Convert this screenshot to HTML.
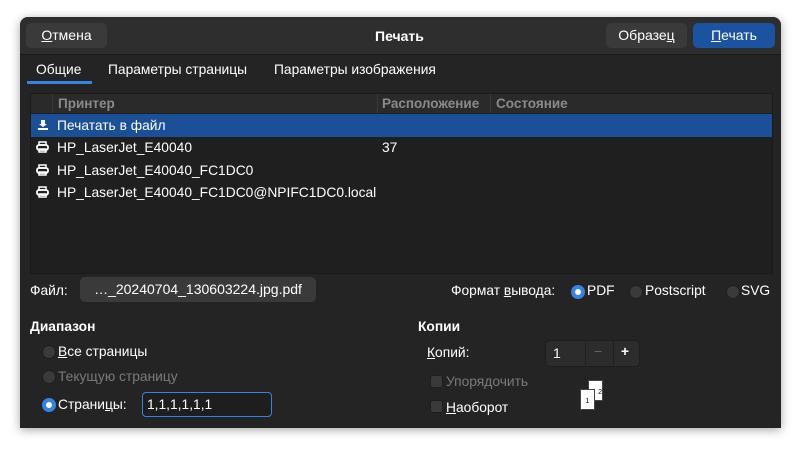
<!DOCTYPE html>
<html><head><meta charset="utf-8"><style>
body{margin:0;width:800px;height:450px;background:#fff;font-family:"Liberation Sans","DejaVu Sans",sans-serif;font-size:13.8px;color:#fff;position:relative;overflow:hidden}
.dlg{position:absolute;left:20px;top:17px;width:761px;height:411px;background:#242424;border-radius:8px 8px 0 0;box-shadow:0 2px 10px rgba(0,0,0,.35)}
.hdr{position:absolute;left:0;top:0;width:761px;height:37px;background:#2e2e2e;border-bottom:1px solid #1b1b1b;border-radius:8px 8px 0 0}
.btn{position:absolute;height:25px;line-height:25px;text-align:center;border-radius:5px;background:#3a3a3a;font-size:14px}
.a{position:absolute;white-space:nowrap}
.u{text-decoration:underline}
.radio{position:absolute;width:12px;height:12px;border-radius:50%;background:#3a3a3a;border:1px solid #1e1e1e}
.radio.on{background:#fff;border:4px solid #3584e4;width:6px;height:6px}
.chk{position:absolute;width:11px;height:11px;border-radius:3px;background:#3a3a3a;border:1px solid #1e1e1e}
svg.ic{position:absolute}
</style></head><body>
<div class="dlg">
 <div class="hdr">
  <div class="btn" style="left:6px;top:6px;width:81px"><span class="u">О</span>тмена</div>
  <div class="a" style="left:355px;top:11px;font-weight:bold;font-size:14px">Печать</div>
  <div class="btn" style="left:586px;top:6px;width:81px">Образе<span class="u">ц</span></div>
  <div class="btn" style="left:673px;top:6px;width:82px;background:#1c53a0"><span class="u">П</span>ечать</div>
 </div>
 <div class="a" style="left:16px;top:45px">Общие</div>
 <div class="a" style="left:7px;top:64px;width:65px;height:3px;background:#3584e4"></div>
 <div class="a" style="left:88px;top:45px">Параметры страницы</div>
 <div class="a" style="left:254px;top:45px">Параметры изображения</div>
 <div class="a" style="left:10px;top:76px;width:741px;height:179px;background:#1f1f1f;border:1px solid #1a1a1a">
  <div class="a" style="left:0;top:0;width:741px;height:19px;background:#2a2a2a;color:#8a8a8a;font-weight:bold;font-size:13.5px;line-height:19px">
   <div class="a" style="left:21px;top:0;height:19px;border-left:1px solid #3a3a3a"></div>
   <div class="a" style="left:27px">Принтер</div>
   <div class="a" style="left:346px;top:0;height:19px;border-left:1px solid #3a3a3a"></div>
   <div class="a" style="left:351px">Расположение</div>
   <div class="a" style="left:459px;top:0;height:19px;border-left:1px solid #3a3a3a"></div>
   <div class="a" style="left:465px">Состояние</div>
  </div>
  <div class="a" style="left:0;top:20px;width:741px;height:23px;background:#1b4f96"></div>
  <svg class="ic" style="left:6px;top:25px" width="12" height="12" viewBox="0 0 12 12"><path d="M4 1h4v4h2L6 8 2 5h2z" fill="#fff"/><rect x="1" y="9" width="10" height="2" fill="#fff"/></svg>
  <div class="a" style="left:26px;top:24px">Печатать в файл</div>
  <svg class="ic" style="left:5px;top:47px" width="13" height="12" viewBox="0 0 13 12"><rect x="3" y="1" width="7" height="3" fill="none" stroke="#fff" stroke-width="1.5"/><rect x="1" y="4" width="11" height="5" rx="2" fill="none" stroke="#fff" stroke-width="1.8"/><rect x="3" y="8" width="7" height="3" fill="none" stroke="#fff" stroke-width="1.5"/></svg>
  <div class="a" style="left:26px;top:46px">HP_LaserJet_E40040</div><div class="a" style="left:351px;top:46px">37</div>
  <svg class="ic" style="left:5px;top:70px" width="13" height="12" viewBox="0 0 13 12"><rect x="3" y="1" width="7" height="3" fill="none" stroke="#fff" stroke-width="1.5"/><rect x="1" y="4" width="11" height="5" rx="2" fill="none" stroke="#fff" stroke-width="1.8"/><rect x="3" y="8" width="7" height="3" fill="none" stroke="#fff" stroke-width="1.5"/></svg>
  <div class="a" style="left:26px;top:69px">HP_LaserJet_E40040_FC1DC0</div>
  <svg class="ic" style="left:5px;top:92px" width="13" height="12" viewBox="0 0 13 12"><rect x="3" y="1" width="7" height="3" fill="none" stroke="#fff" stroke-width="1.5"/><rect x="1" y="4" width="11" height="5" rx="2" fill="none" stroke="#fff" stroke-width="1.8"/><rect x="3" y="8" width="7" height="3" fill="none" stroke="#fff" stroke-width="1.5"/></svg>
  <div class="a" style="left:26px;top:91px">HP_LaserJet_E40040_FC1DC0@NPIFC1DC0.local</div>
 </div>
 <div class="a" style="left:10px;top:266px">Файл:</div>
 <div class="btn" style="left:60px;top:260px;width:236px;height:25px">…_20240704_130603224.jpg.pdf</div>
 <div class="a" style="left:431px;top:266px">Формат <span class="u">в</span>ывода:</div>
 <div class="radio on" style="left:551px;top:268px"></div><div class="a" style="left:567px;top:266px">PDF</div>
 <div class="radio" style="left:609px;top:268px"></div><div class="a" style="left:625px;top:266px">Postscript</div>
 <div class="radio" style="left:706px;top:268px"></div><div class="a" style="left:721px;top:266px">SVG</div>
 <div class="a" style="left:10px;top:302px;font-weight:bold">Диапазон</div>
 <div class="radio" style="left:22px;top:328px"></div><div class="a" style="left:38px;top:327px"><span class="u">В</span>се страницы</div>
 <div class="radio" style="left:22px;top:353px"></div><div class="a" style="left:38px;top:352px;color:#7a7a7a">Текущую страницу</div>
 <div class="radio on" style="left:22px;top:381px"></div><div class="a" style="left:38px;top:380px">Страни<span class="u">ц</span>ы:</div>
 <div class="a" style="left:122px;top:375px;width:124px;height:23px;border:1px solid #3584e4;border-radius:4px;background:#1e1e1e;line-height:23px;padding-left:4px;box-sizing:content-box">1,1,1,1,1,1</div>
 <div class="a" style="left:398px;top:302px;font-weight:bold">Копии</div>
 <div class="a" style="left:407px;top:328px"><span class="u">К</span>опий:</div>
 <div class="a" style="left:525px;top:323px;width:93px;height:25px;background:#2c2c2c;border-radius:5px;border:1px solid #1e1e1e">
  <div class="a" style="left:7px;top:4px;font-size:14px">1</div>
  <div class="a" style="left:39px;top:0;height:25px;border-left:1px solid #202020"></div>
  <div class="a" style="left:48px;top:3px;color:#666">−</div>
  <div class="a" style="left:67px;top:0;height:25px;border-left:1px solid #202020"></div>
  <div class="a" style="left:75px;top:3px;font-weight:bold">+</div>
 </div>
 <div class="chk" style="left:410px;top:358px"></div><div class="a" style="left:426px;top:357px;color:#7a7a7a">Упорядочить</div>
 <div class="chk" style="left:410px;top:383px"></div><div class="a" style="left:426px;top:383px"><span class="u">Н</span>аоборот</div>
 <div class="a" style="left:568px;top:363px;width:13px;height:19px;background:#fff;border:1px solid #444;color:#000;font-size:7px;text-align:right;line-height:24px">2</div>
 <div class="a" style="left:560px;top:372px;width:13px;height:19px;background:#fff;border:1px solid #444;color:#000;font-size:7px;text-align:center;line-height:24px">1</div>
</div>
</body></html>
